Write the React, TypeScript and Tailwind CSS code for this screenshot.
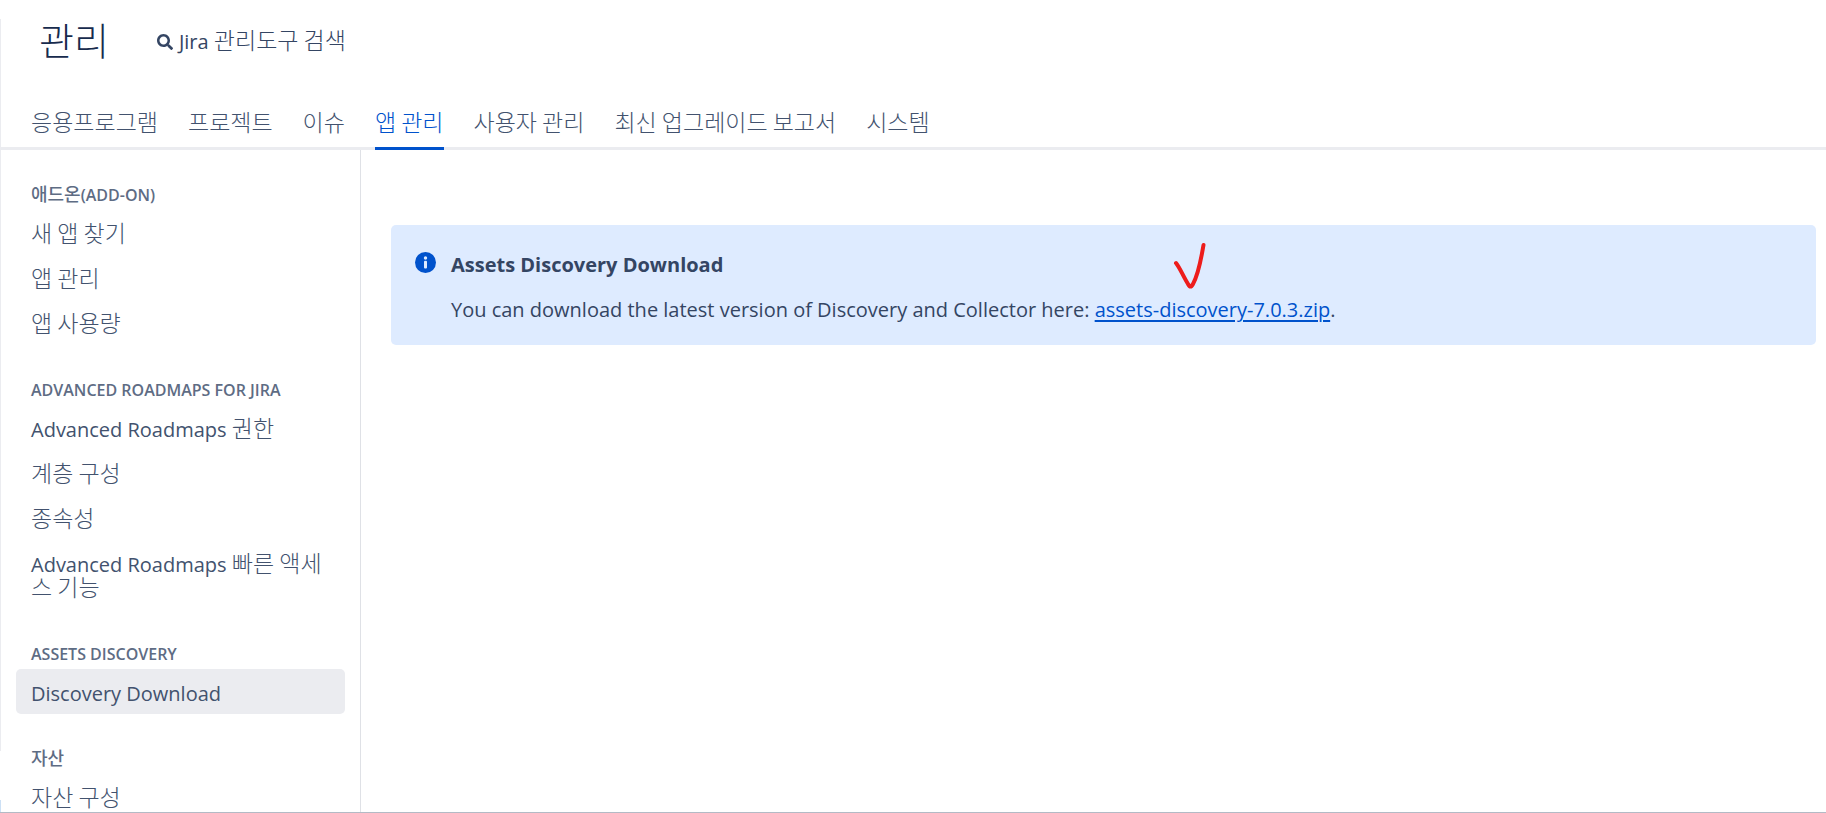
import type { ReactNode } from "react";
import { FaSearch } from "react-icons/fa";

interface NavItem {
  label: ReactNode;
  active?: boolean;
}

interface NavGroup {
  title: ReactNode;
  items: NavItem[];
}

// Hangul is drawn larger and lighter than the latin text beside it
function Ko({ children }: { children: ReactNode }) {
  return (
    <span className="font-['Noto_Sans_CJK_KR',sans-serif] text-[23px] leading-[16px] font-light">
      {children}
    </span>
  );
}

function KoTitle({ children }: { children: ReactNode }) {
  return (
    <span className="font-['Noto_Sans_CJK_KR',sans-serif] text-[18px] leading-[16px] font-medium">
      {children}
    </span>
  );
}

const tabs = [
  "응용프로그램",
  "프로젝트",
  "이슈",
  "앱 관리",
  "사용자 관리",
  "최신 업그레이드 보고서",
  "시스템",
];

const activeTab = "앱 관리";

const groups: NavGroup[] = [
  {
    title: (
      <>
        <KoTitle>애드온</KoTitle>(ADD-ON)
      </>
    ),
    items: [
      { label: <Ko>새 앱 찾기</Ko> },
      { label: <Ko>앱 관리</Ko> },
      { label: <Ko>앱 사용량</Ko> },
    ],
  },
  {
    title: "ADVANCED ROADMAPS FOR JIRA",
    items: [
      {
        label: (
          <>
            Advanced Roadmaps <Ko>권한</Ko>
          </>
        ),
      },
      { label: <Ko>계층 구성</Ko> },
      { label: <Ko>종속성</Ko> },
      {
        label: (
          <>
            Advanced Roadmaps <Ko>빠른 액세스 기능</Ko>
          </>
        ),
      },
    ],
  },
  {
    title: "ASSETS DISCOVERY",
    items: [{ label: "Discovery Download", active: true }],
  },
  {
    title: <KoTitle>자산</KoTitle>,
    items: [{ label: <Ko>자산 구성</Ko> }],
  },
];

function Header() {
  return (
    <header className="border-b-[3px] border-[#ebecf0]">
      <div className="flex h-[84px] items-center gap-[48px] pl-[38px]">
        <h1 className="pb-[6px] font-['Noto_Sans_CJK_KR',sans-serif] text-[38px] leading-[48px] font-light text-[#172b4d]">
          관리
        </h1>
        <button className="flex items-center gap-[6px] text-[20px] leading-[30px] text-[#344563]">
          <FaSearch className="size-4" />
          <span>
            Jira <Ko>관리도구 검색</Ko>
          </span>
        </button>
      </div>
      <nav className="flex gap-[30px] pt-[20px] pl-[30px]">
        {tabs.map((tab) => (
          <a
            key={tab}
            href="#"
            className={`-mb-[3px] border-b-[3px] leading-[43px] ${
              tab === activeTab
                ? "border-[#0052cc] text-[#0052cc]"
                : "border-transparent text-[#42526e]"
            }`}
          >
            <Ko>{tab}</Ko>
          </a>
        ))}
      </nav>
    </header>
  );
}

function Sidebar() {
  return (
    <aside className="w-[360px] shrink-0 border-r border-[#dfe1e6] pr-[15px] pl-[15px]">
      {groups.map((group, i) => (
        <section key={i} className="pt-[30px]">
          <h2 className="pl-[15px] text-[16px] leading-[30px] font-semibold text-[#5e6c84]">
            {group.title}
          </h2>
          <ul>
            {group.items.map((item, j) => (
              <li key={j}>
                <a
                  href="#"
                  className={`block rounded-[5px] px-[15px] pt-[13px] pb-[8px] text-[20px] leading-[24px] break-all text-[#42526e] ${
                    item.active ? "bg-[#ebecf0]" : ""
                  }`}
                >
                  {item.label}
                </a>
              </li>
            ))}
          </ul>
        </section>
      ))}
    </aside>
  );
}

function InfoMessage() {
  return (
    <div className="flex gap-[15px] rounded-[5px] bg-[#deebff] pt-[25px] pr-[24px] pb-[20px] pl-[24px] text-[20px] leading-[30px] text-[#344563]">
      <svg viewBox="0 0 21 21" className="mt-[2px] size-[21px] shrink-0">
        <circle cx="10.5" cy="10.5" r="10.5" fill="#0052cc" />
        <circle cx="10.5" cy="6" r="1.7" fill="#deebff" />
        <rect x="9" y="8.8" width="3" height="7.6" rx="1" fill="#deebff" />
      </svg>
      <div>
        <p className="font-bold">Assets Discovery Download</p>
        <p className="mt-[15px]">
          You can download the latest version of Discovery and Collector here:{" "}
          <span className="relative inline-block">
            <a
              href="#"
              className="text-[#0052cc] underline decoration-2 underline-offset-3"
            >
              assets-discovery-7.0.3.zip
            </a>
            <svg
              viewBox="0 0 34 50"
              className="absolute bottom-[34px] left-[78px] h-[50px] w-[34px]"
              fill="none"
              stroke="#ed1c1c"
              strokeWidth="4"
              strokeLinecap="round"
              strokeLinejoin="round"
            >
              <path d="M3 22 C7 27 10 35 15 43 Q17.500 48 20 43 C26 32 28 18 30.500 4" />
            </svg>
          </span>
          .
        </p>
      </div>
    </div>
  );
}

export default function App() {
  return (
    <div className="flex h-screen overflow-hidden border-b border-[#b3bac5] bg-white font-['Open_Sans','Noto_Sans_CJK_KR',sans-serif]">
      <div className="flex w-px shrink-0 flex-col pt-[19px]">
        <div className="grow bg-[#ebecf0]" />
        <div className="mt-[49px] h-[12px] bg-[#cce0f5]" />
      </div>
      <div className="flex min-w-0 grow flex-col">
        <Header />
        <div className="flex min-h-0 grow">
          <Sidebar />
          <main className="min-w-0 grow pt-[75px] pr-[10px] pl-[30px]">
            <InfoMessage />
          </main>
        </div>
      </div>
    </div>
  );
}
